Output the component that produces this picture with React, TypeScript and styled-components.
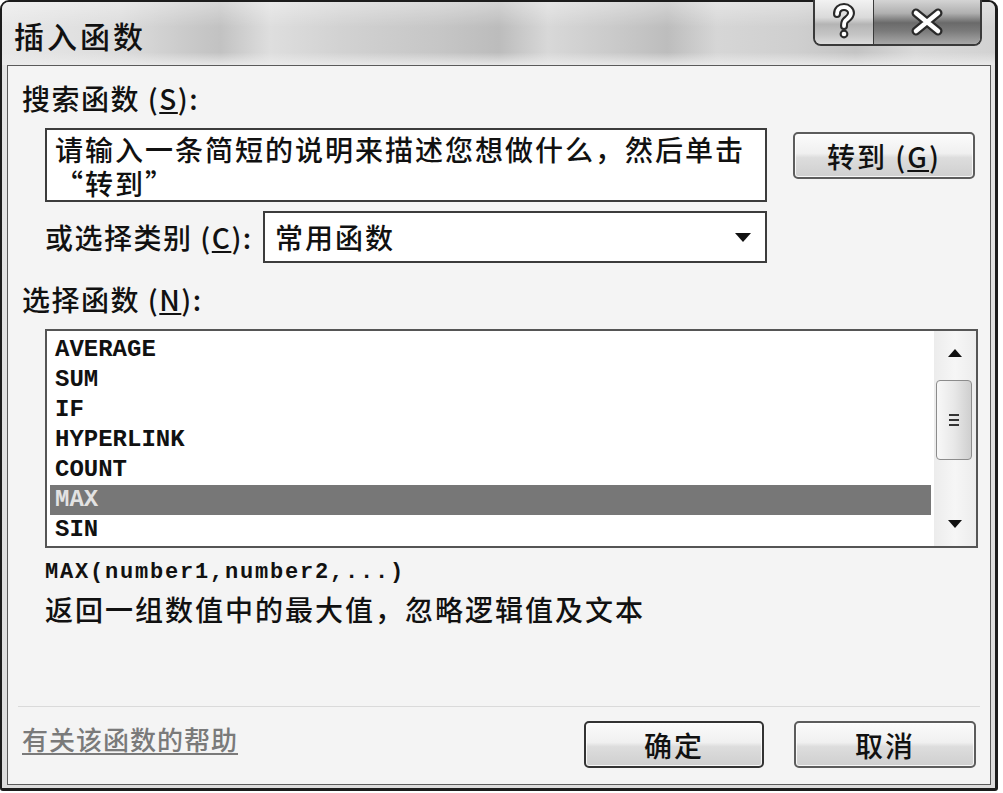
import React from "react";
import styled, { createGlobalStyle } from "styled-components";

const GlobalStyle = createGlobalStyle`
  html, body { margin: 0; padding: 0; background: #ffffff; }
  body { font-family: "Noto Sans CJK SC", "Noto Sans", sans-serif; color: #111; }
  * { box-sizing: border-box; }
`;

const CJK = `"Noto Sans CJK SC", "Noto Sans", sans-serif`;
const MONO = `"Liberation Mono", "DejaVu Sans Mono", monospace`;

const Window = styled.div`
  position: relative;
  width: 998px;
  height: 791px;
  border-style: solid;
  border-color: #1c1c1c;
  border-width: 2px 3px 3px 2px;
  border-radius: 9px 9px 3px 3px;
  background: linear-gradient(180deg, #e4e4e4 0%, #dcdcdc 100%);
  padding: 0 4px 3px 5px;
  display: flex;
  flex-direction: column;
`;

const TitleBar = styled.div`
  height: 63px;
  margin: 0 -4px 0 -5px;
  padding-left: 12px;
  display: flex;
  align-items: center;
  border-radius: 7px 7px 0 0;
  background:
    linear-gradient(180deg, rgba(255,255,255,0.35) 0%, rgba(255,255,255,0) 40%, rgba(255,255,255,0) 80%, rgba(235,235,235,0.9) 100%),
    linear-gradient(90deg, #e8e8e8 0%, #dcdcdc 12%, #c9c9c9 19%, #c2c2c2 22%, #dedede 27%, #d2d2d2 34%, #c6c6c6 44%, #bcbcbc 50%, #d8d8d8 55%, #c9c9c9 62%, #bdbdbd 67%, #d6d6d6 72%, #cfcfcf 80%, #c4c4c4 86%, #d9d9d9 92%, #d2d2d2 100%);
`;

const Title = styled.div`
  font-family: ${CJK};
  font-weight: 500;
  font-size: 30px;
  letter-spacing: 3px;
  line-height: 36px;
  color: #111;
  margin-top: 2px;
`;

const CaptionGroup = styled.div`
  position: absolute;
  top: -2px;
  right: 13px;
  height: 46px;
  display: flex;
  border: 2px solid #3a3a3a;
  border-top: none;
  border-radius: 0 0 8px 8px;
  overflow: hidden;
`;

const CaptionButton = styled.div<{ $w: number; $close?: boolean }>`
  width: ${(p) => p.$w}px;
  height: 100%;
  display: flex;
  align-items: center;
  justify-content: center;
  background: ${(p) =>
    p.$close
      ? "linear-gradient(180deg, #d4d4d4 0%, #b0b0b0 30%, #6a6a6a 52%, #7a7a7a 70%, #a8a8a8 100%)"
      : "linear-gradient(180deg, #f2f2f2 0%, #dadada 40%, #b4b4b4 55%, #c6c6c6 80%, #dcdcdc 100%)"};
  & + & {
    border-left: 1px solid #3a3a3a;
  }
`;

const Client = styled.div`
  flex: 1;
  display: flex;
  flex-direction: column;
  background: #f4f4f4;
  border: 1px solid #5a5a5a;
  padding: 15px 14px 16px 14px;
`;

const SectionLabel = styled.div<{ $top?: number }>`
  font-family: ${CJK};
  font-weight: 500;
  font-size: 28px;
  line-height: 34px;
  letter-spacing: 1.5px;
  color: #111;
  margin-top: ${(p) => p.$top ?? 0}px;
  white-space: nowrap;
`;

const Row = styled.div<{ $top: number }>`
  display: flex;
  align-items: flex-start;
  margin-top: ${(p) => p.$top}px;
  padding-left: 23px;
`;

const SearchBox = styled.div`
  width: 722px;
  height: 74px;
  border: 2px solid #3c3c3c;
  background: #ffffff;
  padding: 2px 8px 0 8px;
  font-family: ${CJK};
  font-weight: 500;
  font-size: 28px;
  line-height: 34px;
  letter-spacing: 2px;
  color: #111;
  white-space: nowrap;
`;

const PushButton = styled.div<{ $w: number; $default?: boolean }>`
  width: ${(p) => p.$w}px;
  height: 47px;
  display: flex;
  align-items: center;
  justify-content: center;
  border: 2px solid ${(p) => (p.$default ? "#333" : "#5c5c5c")};
  border-radius: 5px;
  background: linear-gradient(180deg, #fbfbfb 0%, #f0f0f0 45%, #dddddd 55%, #cfcfcf 100%);
  box-shadow: inset 0 0 0 1px rgba(255,255,255,0.8);
  font-family: ${CJK};
  font-weight: 500;
  font-size: 28px;
  letter-spacing: 2px;
  color: #111;
`;

const GoButton = styled(PushButton)`
  margin-left: 26px;
  margin-top: 4px;
`;

const CategoryRow = styled(Row)`
  align-items: center;
`;

const CategoryLabel = styled(SectionLabel)`
  width: 218px;
`;

const Select = styled.div`
  width: 504px;
  height: 52px;
  border: 2px solid #3c3c3c;
  background: #ffffff;
  display: flex;
  align-items: center;
  justify-content: space-between;
  padding: 0 14px 0 10px;
  font-family: ${CJK};
  font-weight: 500;
  font-size: 28px;
  letter-spacing: 2px;
  color: #111;
`;

const ListBox = styled.div`
  margin-top: 13px;
  margin-left: 23px;
  width: 933px;
  height: 219px;
  border: 2px solid #555;
  background: #ffffff;
  display: flex;
`;

const Items = styled.div`
  flex: 1;
  padding: 4px 3px 0 3px;
`;

const Item = styled.div<{ $selected?: boolean }>`
  height: 30px;
  line-height: 30px;
  padding-left: 5px;
  font-family: ${MONO};
  font-weight: 700;
  font-size: 24px;
  color: ${(p) => (p.$selected ? "#e2e2e2" : "#111")};
  background: ${(p) => (p.$selected ? "#777777" : "transparent")};
`;

const ScrollBar = styled.div`
  width: 42px;
  display: flex;
  flex-direction: column;
  background: linear-gradient(90deg, #ececec 0%, #f6f6f6 50%, #ececec 100%);
`;

const ArrowCell = styled.div`
  height: 44px;
  display: flex;
  align-items: center;
  justify-content: center;
`;

const Thumb = styled.div`
  margin: 5px 4px 0 2px;
  height: 80px;
  border: 1px solid #8c8c8c;
  border-radius: 4px;
  background: linear-gradient(90deg, #f8f8f8 0%, #e8e8e8 50%, #cfcfcf 100%);
  display: flex;
  align-items: center;
  justify-content: center;
`;

const Track = styled.div`
  flex: 1;
`;

const Syntax = styled.div`
  margin-top: 11px;
  margin-left: 23px;
  font-family: ${MONO};
  font-weight: 700;
  font-size: 22px;
  letter-spacing: 1.8px;
  line-height: 28px;
  color: #111;
`;

const Description = styled.div`
  margin-top: 5px;
  margin-left: 23px;
  font-family: ${CJK};
  font-weight: 500;
  font-size: 28px;
  line-height: 34px;
  letter-spacing: 2px;
  color: #111;
`;

const Separator = styled.div`
  margin-top: auto;
  margin-left: -4px;
  margin-right: -4px;
  height: 1px;
  background: #dadada;
`;

const Footer = styled.div`
  margin-top: 14px;
  display: flex;
  align-items: flex-start;
  gap: 30px;
`;

const HelpLink = styled.div`
  flex: 1;
  margin-top: 1px;
  font-family: ${CJK};
  font-weight: 500;
  font-size: 26px;
  line-height: 34px;
  letter-spacing: 1px;
  color: #7a7a7a;
  text-decoration: underline;
  text-underline-offset: 3px;
`;

const Key = styled.span`
  text-decoration: underline;
`;

const QuestionIcon = () => (
  <svg width="26" height="38" viewBox="0 0 26 38">
    <path d="M6 11 C6 6 9 4 13 4 C17 4 20 7 20 10 C20 14 16 16 14.5 17.5 C13.5 18.5 13 20 13 23" fill="none" stroke="#2a2a2a" strokeWidth="8" strokeLinecap="round" strokeLinejoin="round" />
    <circle cx="13" cy="31" r="4.4" fill="#2a2a2a" />
    <path d="M6 11 C6 6 9 4 13 4 C17 4 20 7 20 10 C20 14 16 16 14.5 17.5 C13.5 18.5 13 20 13 23" fill="none" stroke="#ffffff" strokeWidth="3.8" strokeLinecap="round" strokeLinejoin="round" />
    <circle cx="13" cy="31" r="2.3" fill="#ffffff" />
  </svg>
);

const CloseIcon = () => (
  <svg width="40" height="28" viewBox="0 0 40 28">
    <path d="M9 5 L31 23 M31 5 L9 23" stroke="#2a2a2a" strokeWidth="9" strokeLinecap="round" />
    <path d="M9 5 L31 23 M31 5 L9 23" stroke="#ffffff" strokeWidth="4.5" strokeLinecap="round" />
  </svg>
);

const TriangleDown = ({ w = 16, h = 9 }: { w?: number; h?: number }) => (
  <svg width={w} height={h} viewBox="0 0 16 9">
    <path d="M0 0 L16 0 L8 9 Z" fill="#111" />
  </svg>
);

const TriangleUp = () => (
  <svg width="14" height="8" viewBox="0 0 14 8">
    <path d="M0 8 L14 8 L7 0 Z" fill="#111" />
  </svg>
);

const Grip = () => (
  <svg width="12" height="16" viewBox="0 0 12 16">
    <path d="M1 3 H11 M1 8 H11 M1 13 H11" stroke="#333" strokeWidth="2" />
  </svg>
);

const functions = ["AVERAGE", "SUM", "IF", "HYPERLINK", "COUNT", "MAX", "SIN"];

export default function App() {
  return (
    <>
      <GlobalStyle />
      <Window>
        <TitleBar>
          <Title>插入函数</Title>
        </TitleBar>
        <CaptionGroup>
          <CaptionButton $w={58}>
            <QuestionIcon />
          </CaptionButton>
          <CaptionButton $w={107} $close>
            <CloseIcon />
          </CaptionButton>
        </CaptionGroup>
        <Client>
          <SectionLabel>
            搜索函数 (<Key>S</Key>):
          </SectionLabel>
          <Row $top={13}>
            <SearchBox>
              请输入一条简短的说明来描述您想做什么，然后单击
              <br />
              “转到”
            </SearchBox>
            <GoButton $w={182}>
              转到 (<Key>G</Key>)
            </GoButton>
          </Row>
          <CategoryRow $top={9}>
            <CategoryLabel>
              或选择类别 (<Key>C</Key>):
            </CategoryLabel>
            <Select>
              <span>常用函数</span>
              <TriangleDown />
            </Select>
          </CategoryRow>
          <SectionLabel $top={19}>
            选择函数 (<Key>N</Key>):
          </SectionLabel>
          <ListBox>
            <Items>
              {functions.map((f) => (
                <Item key={f} $selected={f === "MAX"}>
                  {f}
                </Item>
              ))}
            </Items>
            <ScrollBar>
              <ArrowCell>
                <TriangleUp />
              </ArrowCell>
              <Thumb>
                <Grip />
              </Thumb>
              <Track />
              <ArrowCell>
                <TriangleDown w={14} h={8} />
              </ArrowCell>
            </ScrollBar>
          </ListBox>
          <Syntax>MAX(number1,number2,...)</Syntax>
          <Description>返回一组数值中的最大值，忽略逻辑值及文本</Description>
          <Separator />
          <Footer>
            <HelpLink>有关该函数的帮助</HelpLink>
            <PushButton $w={180} $default>
              确定
            </PushButton>
            <PushButton $w={182}>取消</PushButton>
          </Footer>
        </Client>
      </Window>
    </>
  );
}
